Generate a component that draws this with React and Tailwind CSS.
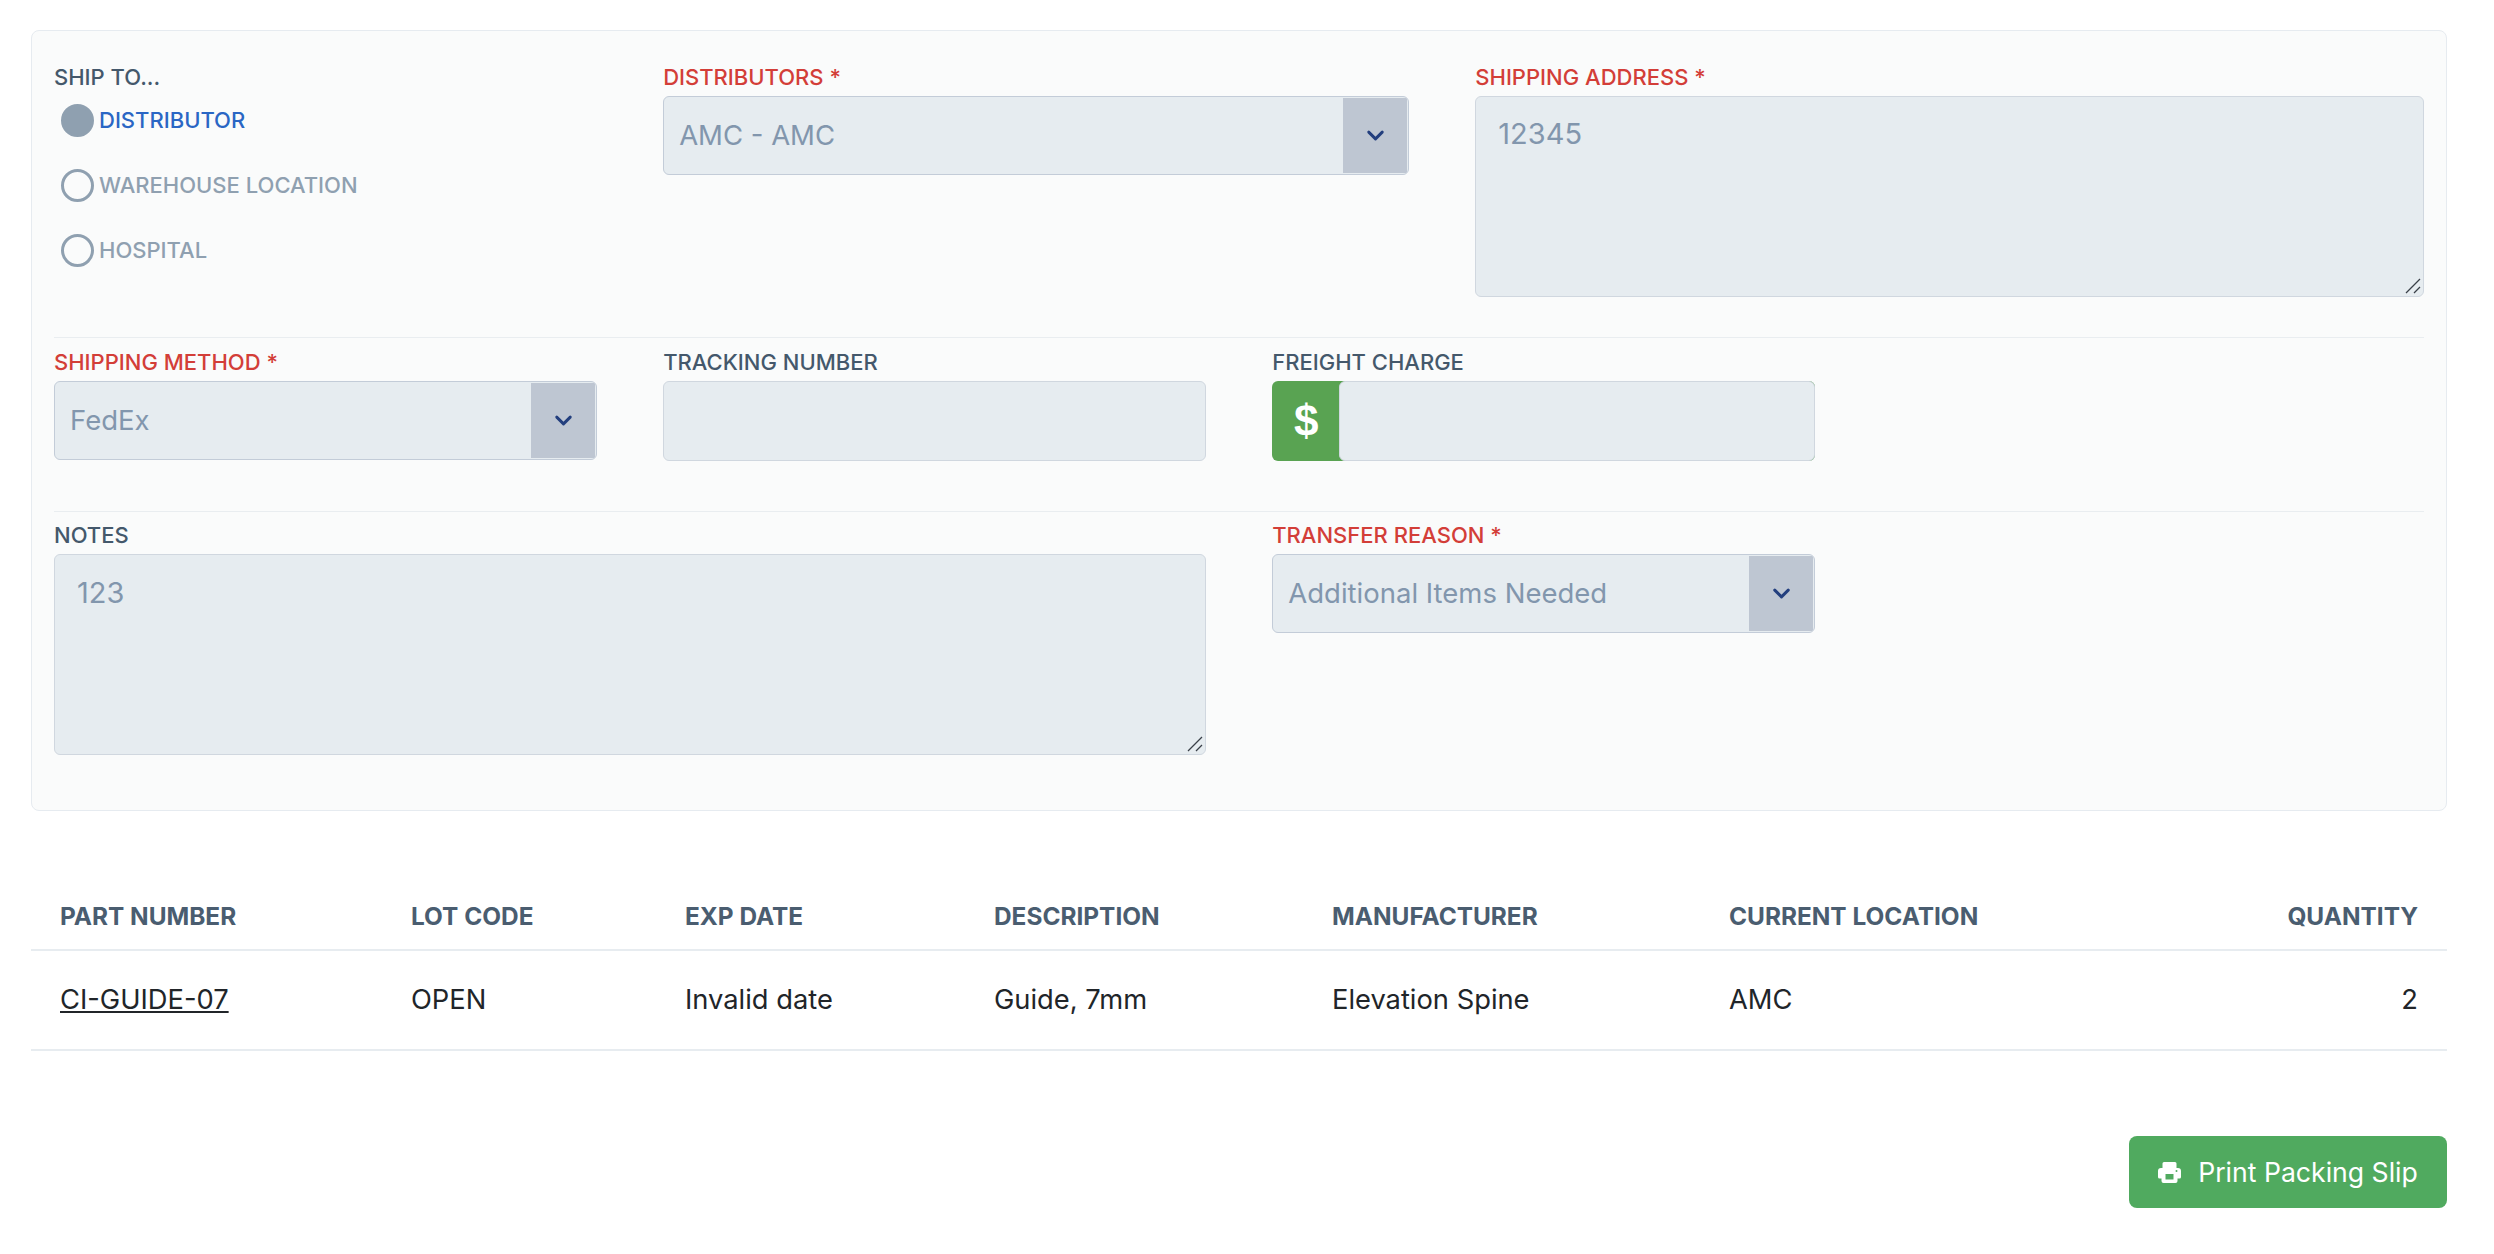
import React from 'react';
import { ChevronDown } from 'lucide-react';

function Label({ children, required, className = '' }) {
  return (
    <div className={`h-[20px] leading-[22px] mb-[10px] text-[22px] font-medium ${required ? 'text-[#d33e38]' : 'text-[#44586b]'} ${className}`}>
      {children}{required && ' *'}
    </div>
  );
}

function Select({ value }) {
  return (
    <div className="h-[79px] flex items-stretch bg-[#e6ecf0] border-[1.5px] border-[#c3ccd8] rounded-[6px] overflow-hidden">
      <div className="flex-1 flex items-center pl-[15px] pt-[1px] text-[27.5px] text-[#8296ad]">{value}</div>
      <div className="w-[64px] mr-[1px] my-[1px] pl-[1px] bg-[#bec6d2] flex items-center justify-center text-[#233f7e]">
        <ChevronDown size={27} strokeWidth={2.6} />
      </div>
    </div>
  );
}

function Area({ value }) {
  return (
    <div className="relative">
      <textarea
        readOnly
        defaultValue={value}
        className="block w-full h-[201px] resize-none bg-[#e6ecf0] border border-[#d0d7df] rounded-[6px] px-[22px] py-[18.5px] text-[29px] leading-[38px] text-[#8296ad] font-[Inter,sans-serif] outline-none"
      />
      <svg className="absolute right-[3px] bottom-[3px]" width="16" height="16" viewBox="0 0 16 16" stroke="#3a4048" strokeWidth="1.3" fill="none">
        <path d="M1 15 15 1M9 15l6-6" />
      </svg>
    </div>
  );
}

function Radio({ label, on }) {
  return (
    <div className="h-[65px] flex items-center pl-[7px] gap-[5px]">
      <span className={`w-[33px] h-[33px] rounded-full border-[3px] border-[#8fa0b0] ${on ? 'bg-[#8fa0b0]' : ''}`} />
      <span className={`text-[22px] font-medium ${on ? 'text-[#2a66c4]' : 'text-[#8fa0b0]'}`}>{label}</span>
    </div>
  );
}

function PrintIcon() {
  return (
    <svg width="23" height="21" viewBox="0 0 23 21" fill="currentColor" fillRule="evenodd">
      <path d="M4.5 1.5a1.5 1.5 0 0 1 1.5-1.5h11a1.5 1.5 0 0 1 1.5 1.5v4.5h1.5a3 3 0 0 1 3 3v6a1.5 1.5 0 0 1-1.5 1.5h-2v2.5a2 2 0 0 1-2 2h-12a2 2 0 0 1-2-2v-2.5h-2a1.500 1.500 0 0 1-1.500-1.500v-6a3 3 0 0 1 3-3h1.500z M7.500 12v5.500h8v-5.500z M18.500 8a1 1 0 1 0 0 2a1 1 0 0 0 0-2z" />
    </svg>
  );
}

const cols = [
  { name: 'PART NUMBER', val: 'CI-GUIDE-07', w: 'w-[351px]', link: true },
  { name: 'LOT CODE', val: 'OPEN', w: 'w-[274px]' },
  { name: 'EXP DATE', val: 'Invalid date', w: 'w-[309px]' },
  { name: 'DESCRIPTION', val: 'Guide, 7mm', w: 'w-[338px]' },
  { name: 'MANUFACTURER', val: 'Elevation Spine', w: 'w-[397px]' },
  { name: 'CURRENT LOCATION', val: 'AMC', w: 'w-[350px]' },
  { name: 'QUANTITY', val: '2', right: true },
];

export default function App() {
  return (
    <div className="min-h-[1254px] bg-white pl-[31px] pr-[47px] pt-[30px] font-[Inter,sans-serif]">
      <div className="bg-[#fafbfb] border-[1.5px] border-[#e6ebf0] rounded-[8px] px-[22px] pt-[34.5px] pb-[55px]">
        <div className="grid grid-cols-12 gap-x-[66.5px]">
          <div className="col-span-3">
            <Label className="!mb-0">SHIP TO...</Label>
            <div className="mt-[2px]">
              <Radio label="DISTRIBUTOR" on />
              <Radio label="WAREHOUSE LOCATION" />
              <Radio label="HOSPITAL" />
            </div>
          </div>
          <div className="col-span-4">
            <Label required>DISTRIBUTORS</Label>
            <Select value="AMC - AMC" />
          </div>
          <div className="col-span-5">
            <Label required>SHIPPING ADDRESS</Label>
            <Area value="12345" />
          </div>
        </div>

        <div className="border-t-[1.5px] border-[#e9edf0] mt-[40.5px] mb-[12.5px]" />

        <div className="grid grid-cols-12 gap-x-[66.5px]">
          <div className="col-span-3">
            <Label required>SHIPPING METHOD</Label>
            <Select value="FedEx" />
          </div>
          <div className="col-span-3">
            <Label>TRACKING NUMBER</Label>
            <input readOnly className="block w-full h-[80px] bg-[#e6ecf0] border border-[#d0d7df] rounded-[6px] outline-none" />
          </div>
          <div className="col-span-3">
            <Label>FREIGHT CHARGE</Label>
            <div className="h-[80px] flex bg-[#59a352] rounded-[6px]">
              <div className="w-[67px] pl-[1px] flex items-center justify-center text-white text-[44px] font-bold font-['Liberation_Sans',sans-serif]">$</div>
              <input readOnly className="flex-1 min-w-0 bg-[#e6ecf0] border border-[#d0d7df] rounded-[6px] outline-none" />
            </div>
          </div>
        </div>

        <div className="border-t-[1.5px] border-[#e9edf0] mt-[50px] mb-[12.5px]" />

        <div className="grid grid-cols-12 gap-x-[66.5px]">
          <div className="col-span-6">
            <Label>NOTES</Label>
            <Area value="123" />
          </div>
          <div className="col-span-3">
            <Label required>TRANSFER REASON</Label>
            <Select value="Additional Items Needed" />
          </div>
        </div>
      </div>

      <table className="w-full table-fixed mt-[73px] border-collapse">
        <thead>
          <tr className="border-b-2 border-[#e7ecf0]">
            {cols.map(c => (
              <th key={c.name} className={`${c.w || ''} h-[66px] px-[29px] text-[24.4px] font-bold text-[#4a5d70] ${c.right ? 'text-right' : 'text-left'}`}>{c.name}</th>
            ))}
          </tr>
        </thead>
        <tbody>
          <tr className="border-b-2 border-[#e7ecf0]">
            {cols.map(c => (
              <td key={c.name} className={`h-[100px] px-[29px] text-[27.3px] text-[#212529] ${c.right ? 'text-right' : 'text-left'}`}>
                {c.link ? <a href="#" className="underline">{c.val}</a> : c.val}
              </td>
            ))}
          </tr>
        </tbody>
      </table>

      <div className="flex justify-end mt-[85px]">
        <button className="h-[72px] w-[318px] pt-[1px] flex items-center justify-center gap-[17px] bg-[#50aa5f] rounded-[8px] text-white text-[26.6px]">
          <PrintIcon />
          Print Packing Slip
        </button>
      </div>
    </div>
  );
}
